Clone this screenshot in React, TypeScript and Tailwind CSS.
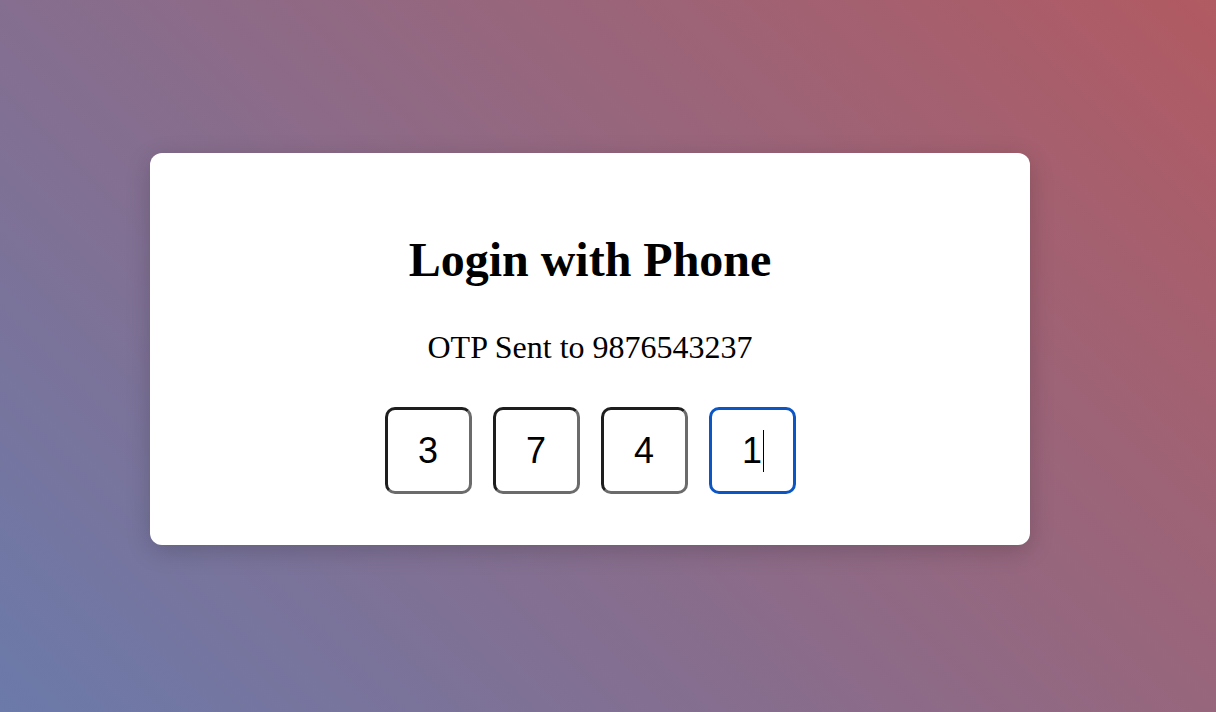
const digits = ["3", "7", "4", "1"];

const OtpBox = ({ value, active }: { value: string; active?: boolean }) => (
  <div
    className={
      active
        ? "relative flex h-[87px] w-[87px] items-center justify-center rounded-[10px] border-[3px] border-[#0b56c4] bg-white"
        : "relative flex h-[87px] w-[87px] items-center justify-center rounded-[10px] border-[3px] border-t-[#1e1e1e] border-l-[#1e1e1e] border-r-[#6b6b6b] border-b-[#6b6b6b] bg-white"
    }
  >
    <span className="relative font-['Liberation_Sans',Arial,sans-serif] text-[36px] leading-[42px] text-black">
      {value}
      {active && (
        <span className="absolute left-full top-0 ml-[1px] h-[42px] w-px bg-black" />
      )}
    </span>
  </div>
);

export default function App() {
  return (
    <div className="flex h-screen w-full items-center justify-center bg-[linear-gradient(45deg,#6b7aaa,#b15a62)] pr-[36px] pb-[14px]">
      <div className="flex h-[392px] w-[880px] flex-col items-center rounded-[12px] bg-white pt-[79px] shadow-[0_6px_24px_rgba(0,0,0,0.18)]">
        <h1 className="font-['Liberation_Serif','Times_New_Roman',serif] text-[48px] font-bold leading-[56px] text-black">
          Login with Phone
        </h1>
        <p className="mt-[41px] font-['Liberation_Serif','Times_New_Roman',serif] text-[32px] leading-[36px] text-black">
          OTP Sent to 9876543237
        </p>
        <div className="mt-[42px] flex gap-[21px]">
          {digits.map((d, i) => (
            <OtpBox key={i} value={d} active={i === digits.length - 1} />
          ))}
        </div>
      </div>
    </div>
  );
}
